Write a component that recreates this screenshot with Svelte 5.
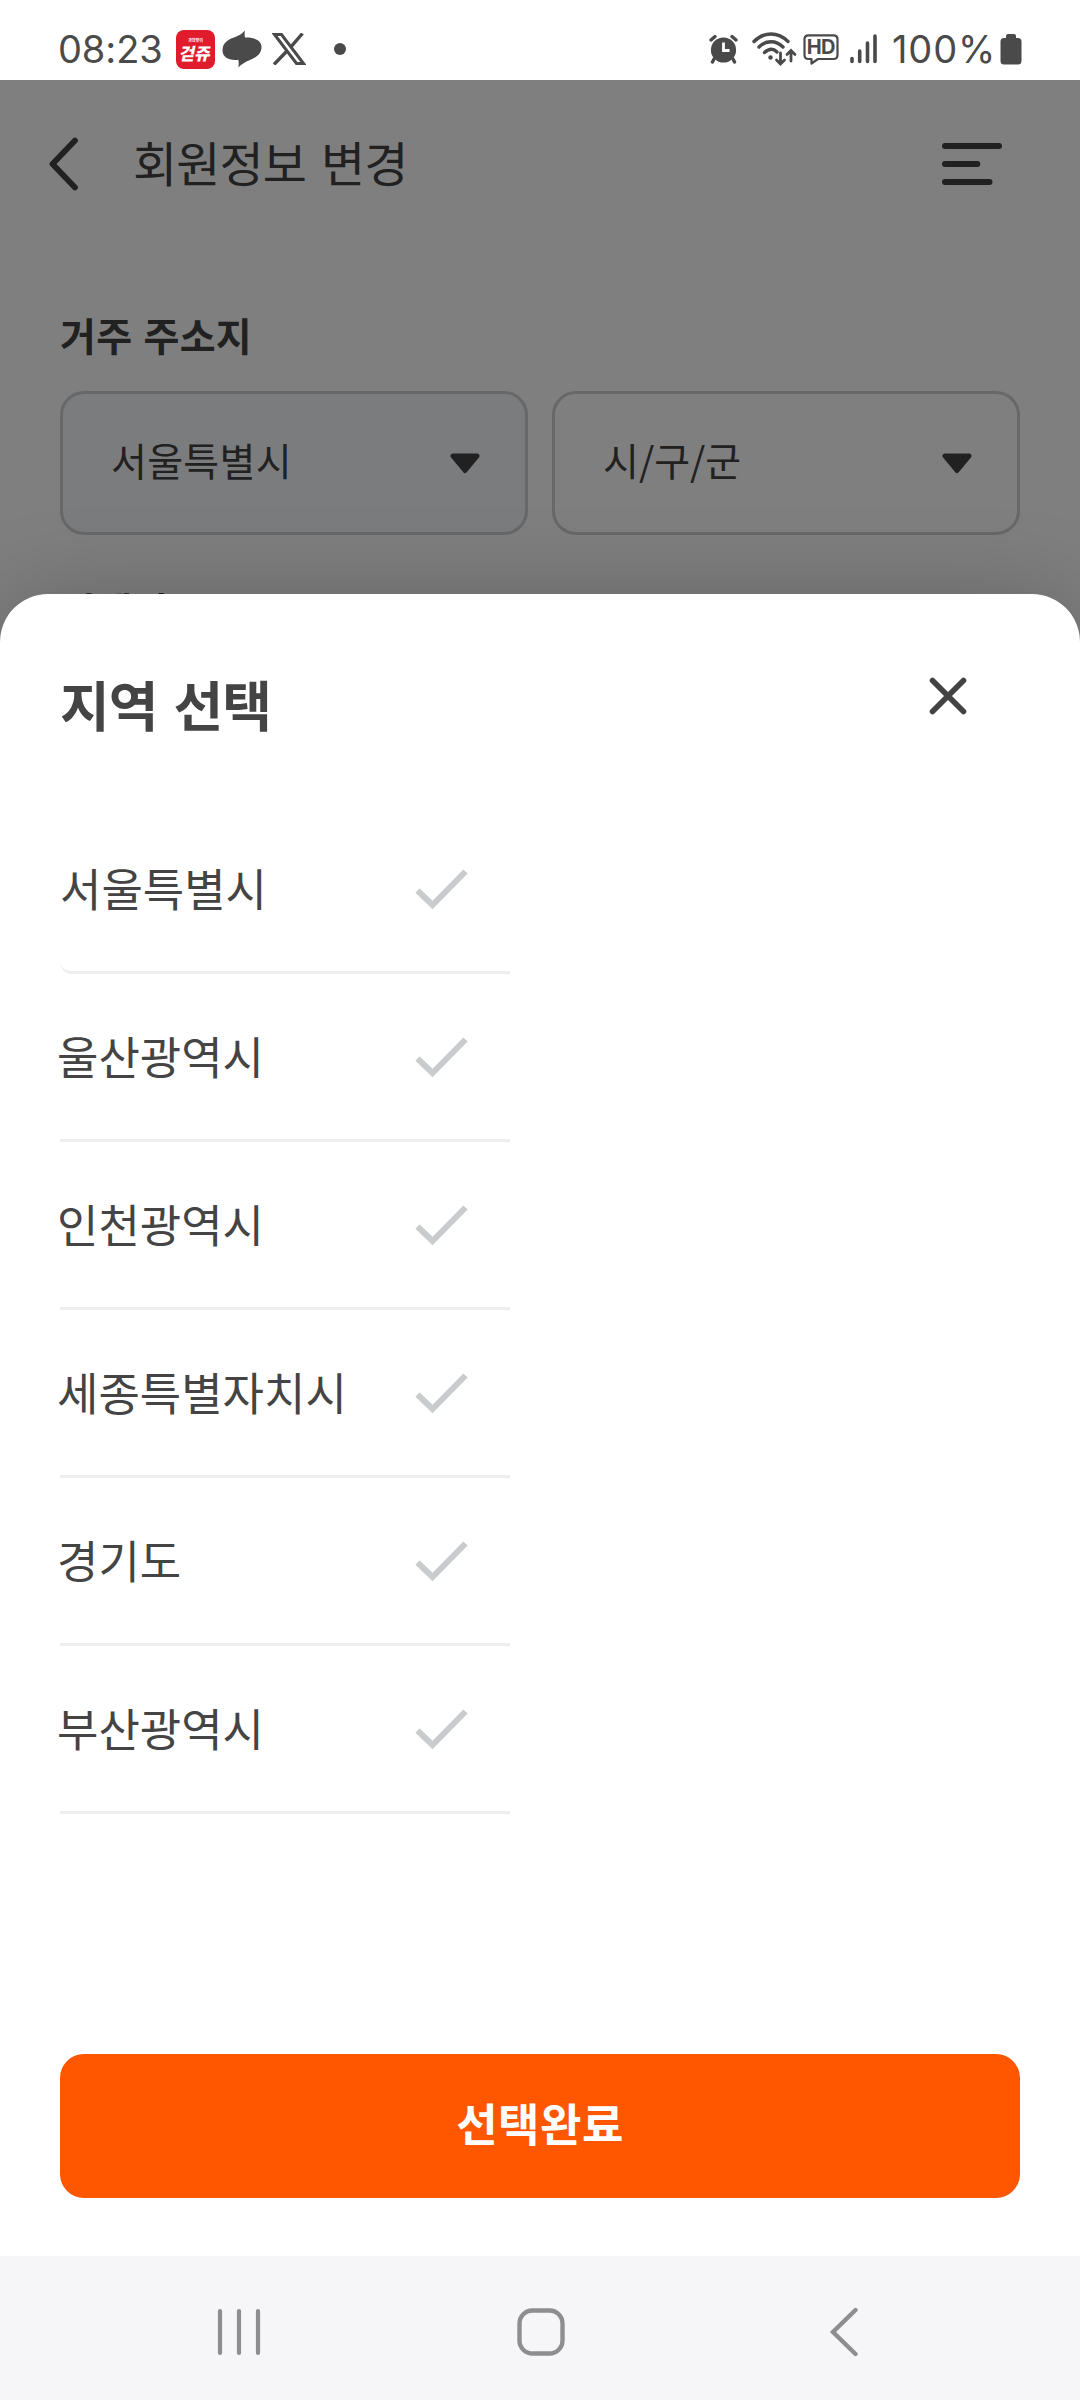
<script>
    import { onMount } from 'svelte';

    let regions = ['서울특별시', '울산광역시', '인천광역시', '세종특별자치시', '경기도', '부산광역시'];
    let selected = null;
    let selects = [
        { label: '서울특별시', filled: true },
        { label: '시/구/군', filled: false }
    ];

    function selectRegion(region) {
        selected = region;
    }

    onMount(() => {
        document.title = '회원정보 변경';
    });
</script>

<div class="screen">
    <div class="status-bar">
        <div class="status-left">
            <span class="clock">08:23</span>
            <div class="app-icon">
                <span class="app-small">과천맞이</span>
                <span class="app-name">걷쥬</span>
            </div>
            <svg class="blob" width="40" height="38" viewBox="0 0 40 38">
                <path d="M23 0.500C22.500 3 22.500 5.500 23 7.500C33 7 39.500 11 39.500 17C39.500 24 34 27.500 28 30C23 32 19 34.500 16.500 37.500C16.800 35 16.800 32 16.300 29.800C7 31 .5 27 .5 20.500C.5 13 6 9.500 12 7.500C17 5.500 20.500 3.500 23 0.500Z" fill="#4a4a4a" />
            </svg>
            <svg class="x-logo" width="34" height="32" viewBox="0 0 34 32">
                <path d="M2.500 1.500H9.500L31.500 30.500H24.500Z" fill="none" stroke="#4a4a4a" stroke-width="3" />
                <path d="M30.500 0.500L18.800 14M14.500 18.500L2 31.500" fill="none" stroke="#4a4a4a" stroke-width="3.400" />
            </svg>
            <span class="dot"></span>
        </div>
        <div class="status-right">
            <svg class="alarm" width="30" height="30" viewBox="0 0 30 30">
                <circle cx="14.500" cy="16" r="12.600" fill="#4a4a4a" />
                <path d="M2 6L6 2.500M27 6L23 2.500M5 25L3.500 28M24 25L25.500 28" stroke="#4a4a4a" stroke-width="3.400" stroke-linecap="round" />
                <path d="M14.500 8.500V16.500H20.500" fill="none" stroke="#fff" stroke-width="2.800" />
            </svg>
            <svg class="wifi" width="45" height="34" viewBox="0 0 45 34" fill="none" stroke="#4a4a4a" stroke-width="3.400" stroke-linecap="round">
                <path d="M2 9.500C12 -.5 26 -.5 36 9.500" />
                <path d="M7 15C14 8 24 8 31 15" />
                <path d="M12.500 20.500C17 16.500 21.500 16.500 25 20" />
                <circle cx="18.500" cy="25.500" r="2.200" fill="#4a4a4a" stroke="none" />
                <path d="M28.500 21V31M24.500 28L28.500 32L32.500 28M39 29V19M35 22.500L39 18.500L43 22.500" stroke-width="2.800" />
            </svg>
            <svg class="hd" width="36" height="31" viewBox="0 0 36 31">
                <path d="M5.500 1.300H30.500Q34.500 1.300 34.500 5.300V21Q34.500 25 30.500 25H15L8.500 29.500V25H5.500Q1.500 25 1.500 21V5.300Q1.500 1.300 5.500 1.300Z" fill="none" stroke="#4a4a4a" stroke-width="2.200" stroke-linejoin="round" />
                <text x="17.700" y="20.300" text-anchor="middle">HD</text>
            </svg>
            <svg class="signal" width="28" height="30" viewBox="0 0 28 30" stroke="#4a4a4a" stroke-width="3.600" stroke-linecap="round">
                <path d="M2 24.500V27.500M9.700 17V27.500M17.500 9V27.500M25 2V27.500" />
            </svg>
            <span class="percent">100%</span>
            <svg class="battery" width="22" height="31" viewBox="0 0 22 31">
                <path d="M6 4V2Q6 0 8 0H14Q16 0 16 2V4H18Q21.500 4 21.500 7.500V27Q21.500 30.500 18 30.500H4Q.5 30.500 .5 27V7.500Q.5 4 4 4Z" fill="#4a4a4a" />
            </svg>
        </div>
    </div>

    <div class="page">
        <header>
            <svg class="back" width="30" height="54" viewBox="0 0 30 54">
                <path d="M26 3.500L3.500 27L26 50.500" fill="none" stroke="#424242" stroke-width="5.800" stroke-linecap="round" stroke-linejoin="round" />
            </svg>
            <h1>회원정보 변경</h1>
            <svg class="menu" width="60" height="42" viewBox="0 0 60 42" stroke="#424242" stroke-width="6" stroke-linecap="round">
                <path d="M3 3H57M3 21H35.300M3 39H47.500" />
            </svg>
        </header>

        <h2>거주 주소지</h2>
        <div class="selects">
            {#each selects as select}
                <div class="select" class:filled={select.filled}>
                    <span>{select.label}</span>
                    <svg width="30" height="21" viewBox="0 0 30 21">
                        <path d="M3 3H27L15 17.500Z" fill="#424242" stroke="#424242" stroke-width="5" stroke-linejoin="round" />
                    </svg>
                </div>
            {/each}
        </div>
        <h2 class="email">이메일</h2>
    </div>

    <div class="overlay"></div>

    <div class="sheet">
        <div class="sheet-head">
            <h3>지역 선택</h3>
            <svg width="38" height="38" viewBox="0 0 38 38">
                <path d="M3.500 3.500L34.500 34.500M34.500 3.500L3.500 34.500" stroke="#444" stroke-width="5.600" stroke-linecap="round" />
            </svg>
        </div>

        <ul>
            {#each regions as region}
                <li class:active={selected === region} on:click={() => selectRegion(region)}>
                    <span>{region}</span>
                    <svg width="53" height="41" viewBox="0 0 53 41">
                        <path d="M2.500 21.500L17.500 36L50.500 2.500" fill="none" stroke="#c9cccf" stroke-width="6" />
                    </svg>
                </li>
            {/each}
        </ul>

        <button type="button">선택완료</button>
    </div>

    <nav>
        <svg width="44" height="48" viewBox="0 0 44 48" stroke="#8e8e8e" stroke-width="4.200" stroke-linecap="round">
            <path d="M3 3V45M22 3V45M41 3V45" />
        </svg>
        <svg class="home" width="48" height="48" viewBox="0 0 48 48">
            <rect x="2.500" y="2.500" width="43" height="43" rx="13" fill="none" stroke="#8e8e8e" stroke-width="4.400" />
        </svg>
        <svg width="30" height="50" viewBox="0 0 30 50">
            <path d="M26.500 3L4 25L26.500 47" fill="none" stroke="#8e8e8e" stroke-width="4.400" stroke-linecap="round" stroke-linejoin="miter" />
        </svg>
    </nav>
</div>

<style>
    :global(body) {
        margin: 0;
        background: #fff;
    }

    .screen {
        position: relative;
        display: flex;
        flex-direction: column;
        width: 1080px;
        height: 2400px;
        overflow: hidden;
        font-family: 'Noto Sans CJK KR', 'Noto Sans', sans-serif;
        color: #444;
    }

    h1, h2, h3, ul {
        margin: 0;
        padding: 0;
        font-weight: 400;
    }

    svg {
        display: block;
        flex: none;
    }

    /* Status bar */
    .status-bar {
        display: flex;
        justify-content: space-between;
        height: 80px;
        padding: 18px 58px 0 58px;
        box-sizing: border-box;
        color: #4a4a4a;
        background: #fff;
    }

    .status-left,
    .status-right {
        display: flex;
        align-items: center;
        height: 62px;
    }

    .clock,
    .percent {
        font-family: Inter, Roboto, sans-serif;
        font-size: 38px;
        font-weight: 400;
        line-height: 62px;
        white-space: nowrap;
    }

    .clock {
        width: 118px;
        letter-spacing: -0.1px;
    }

    .percent {
        width: 108px;
        letter-spacing: 0.9px;
    }

    .app-icon {
        display: flex;
        flex-direction: column;
        align-items: center;
        width: 39px;
        height: 39px;
        border-radius: 8px;
        background: #e01b2c;
        color: #fff;
        overflow: hidden;
    }

    .app-small {
        margin-top: 7px;
        font-size: 4px;
        line-height: 7px;
        font-weight: 700;
    }

    .app-name {
        font-size: 17px;
        line-height: 17px;
        font-weight: 900;
        transform: skewX(-12deg);
    }

    .blob {
        margin-left: 7px;
    }

    .x-logo {
        margin-left: 10px;
    }

    .dot {
        width: 12px;
        height: 12px;
        margin-left: 28px;
        border-radius: 50%;
        background: #4a4a4a;
    }

    .wifi {
        margin-left: 13px;
    }

    .hd {
        margin-left: 6px;
    }

    .hd text {
        font: 700 20px Inter, Roboto, sans-serif;
        fill: #4a4a4a;
        letter-spacing: -0.8px;
    }

    .signal {
        margin: 0 14px 0 11px;
    }

    /* Page behind the sheet */
    .page {
        height: 514px;
        overflow: hidden;
        background: #fff;
        color: #424242;
    }

    header {
        display: flex;
        align-items: center;
        height: 168px;
        padding: 0 78px 0 49px;
    }

    h1 {
        flex: 1;
        margin-left: 54px;
        padding-bottom: 6px;
        font-size: 48px;
        line-height: 72px;
        letter-spacing: -0.9px;
        word-spacing: 5px;
    }

    h2 {
        margin: 56px 0 0 60px;
        font-size: 39px;
        font-weight: 700;
        line-height: 60px;
        letter-spacing: 0.3px;
        word-spacing: 2px;
    }

    .selects {
        display: flex;
        gap: 24px;
        margin-top: 27px;
        padding: 0 60px;
    }

    .select {
        display: flex;
        flex: 1;
        align-items: center;
        justify-content: space-between;
        height: 144px;
        padding: 0 45px 0 48px;
        box-sizing: border-box;
        border: 3px solid #d0d0d0;
        border-radius: 24px;
        font-size: 39px;
        font-weight: 400;
    }

    .select span {
        padding-bottom: 8px;
    }

    .select.filled {
        background: #f7f8fb;
        letter-spacing: 0.3px;
    }

    h2.email {
        margin-top: 44px;
    }

    .overlay {
        position: absolute;
        top: 80px;
        left: 0;
        right: 0;
        height: 580px;
        background: rgba(0, 0, 0, 0.5);
    }

    /* Bottom sheet */
    .sheet {
        position: relative;
        display: flex;
        flex-direction: column;
        height: 1662px;
        padding: 0 60px 58px;
        box-sizing: border-box;
        border-radius: 48px 48px 0 0;
        background: #fff;
        box-shadow: 0 0 90px rgba(0, 0, 0, 0.2);
    }

    .sheet-head {
        display: flex;
        justify-content: space-between;
        height: 212px;
        padding-right: 53px;
    }

    .sheet-head svg {
        margin-top: 83px;
    }

    h3 {
        margin-top: 70px;
        font-size: 54px;
        font-weight: 700;
        line-height: 80px;
        letter-spacing: -1px;
        word-spacing: 5px;
    }

    ul {
        flex: 1;
        width: 450px;
        list-style: none;
    }

    li {
        display: flex;
        align-items: center;
        justify-content: space-between;
        height: 168px;
        padding: 2px 42px 0 0;
        box-sizing: border-box;
        border-bottom: 3px solid #eee;
        font-size: 45px;
    }

    li:first-child {
        border-bottom-left-radius: 12px;
    }

    li span {
        margin-left: -3px;
        padding-bottom: 5px;
        white-space: nowrap;
    }

    li:first-child span {
        margin-left: 0;
    }

    li.active {
        color: #ff5700;
    }

    button {
        height: 144px;
        padding: 0 0 7px;
        border: none;
        border-radius: 24px;
        background: #ff5700;
        color: #fff;
        font-family: inherit;
        font-size: 45px;
        font-weight: 700;
        letter-spacing: 0.5px;
    }

    /* Navigation keys */
    nav {
        position: relative;
        display: flex;
        align-items: center;
        justify-content: space-between;
        height: 144px;
        padding: 8px 221px 0 217px;
        box-sizing: border-box;
        background: #f6f6f8;
    }

    .home {
        margin-right: 8px;
    }
</style>
